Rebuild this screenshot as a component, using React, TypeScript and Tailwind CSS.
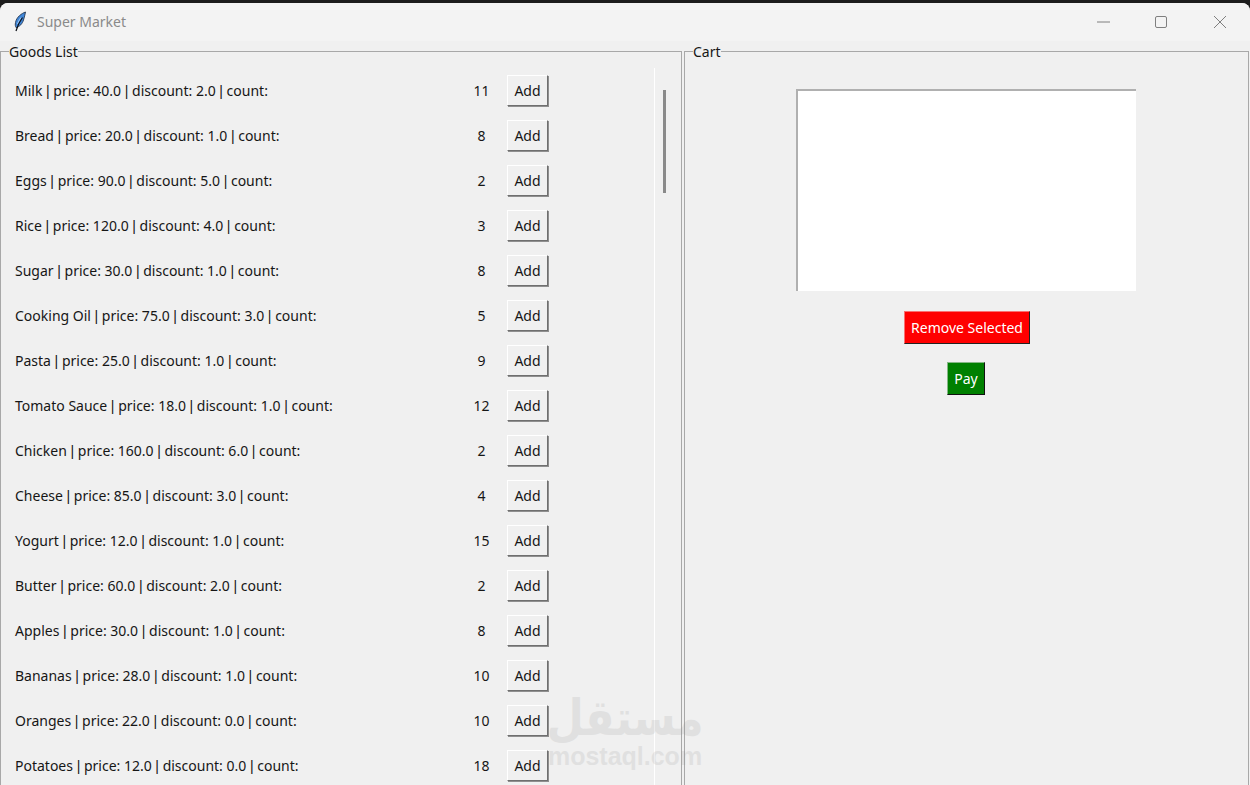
const goods: [string, number][] = [
  ["Milk | price: 40.0 | discount: 2.0 | count:", 11],
  ["Bread | price: 20.0 | discount: 1.0 | count:", 8],
  ["Eggs | price: 90.0 | discount: 5.0 | count:", 2],
  ["Rice | price: 120.0 | discount: 4.0 | count:", 3],
  ["Sugar | price: 30.0 | discount: 1.0 | count:", 8],
  ["Cooking Oil | price: 75.0 | discount: 3.0 | count:", 5],
  ["Pasta | price: 25.0 | discount: 1.0 | count:", 9],
  ["Tomato Sauce | price: 18.0 | discount: 1.0 | count:", 12],
  ["Chicken | price: 160.0 | discount: 6.0 | count:", 2],
  ["Cheese | price: 85.0 | discount: 3.0 | count:", 4],
  ["Yogurt | price: 12.0 | discount: 1.0 | count:", 15],
  ["Butter | price: 60.0 | discount: 2.0 | count:", 2],
  ["Apples | price: 30.0 | discount: 1.0 | count:", 8],
  ["Bananas | price: 28.0 | discount: 1.0 | count:", 10],
  ["Oranges | price: 22.0 | discount: 0.0 | count:", 10],
  ["Potatoes | price: 12.0 | discount: 0.0 | count:", 18],
];

function Feather() {
  return (
    <svg width="16" height="22" viewBox="0 0 16 22" className="ml-[12px]">
      <path d="M13.500 1C9.500 2.500 4.500 6 3.500 11.500c-.4 2.200-.2 3.800.5 5C7.500 16 10.500 12.500 11.500 9c.8-2.800 1.600-5.500 2-8z" fill="#3f86d8" stroke="#26374f" strokeWidth=".9" />
      <path d="M9 6.500C7 9 6 11.500 5.500 13" fill="none" stroke="#a9cdf2" strokeWidth="1" />
      <path d="M10.500 6.500C8 10 5.500 14 4 20" fill="none" stroke="#0b0f16" strokeWidth="1.200" />
    </svg>
  );
}

function Label({ text }: { text: string }) {
  const parts = text.split(" | ");
  return (
    <span className="w-[450px] shrink-0 whitespace-pre">
      {parts.map((p, i) => (
        <span key={p}>
          {i > 0 && (
            <>
              {" "}
              <span className="[font-family:'Liberation_Sans',sans-serif]">|</span>{" "}
            </>
          )}
          {p}
        </span>
      ))}
    </span>
  );
}

export default function App() {
  return (
    <div className="h-[785px] w-[1250px] overflow-hidden bg-[#1c1c1c] pt-[3px] text-[14px] text-[#161616] [font-family:'Noto_Sans',sans-serif]">
      <div className="flex h-[782px] flex-col overflow-hidden rounded-t-[8px] bg-[#f0f0f0]">
        <div className="flex h-[38px] shrink-0 items-center bg-[#f3f3f3]">
          <Feather />
          <span className="ml-[9px] -translate-y-[1px] text-[14px] text-[#8a8a8a]">Super Market</span>
          <div className="ml-auto flex items-center text-[#7f7f7f]">
            <svg width="14" height="14" viewBox="0 0 14 14" className="mr-[43px]"><path d="M0 7h13" stroke="currentColor" /></svg>
            <svg width="14" height="14" viewBox="0 0 14 14" className="mr-[45px]"><rect x="1.500" y="1.500" width="11" height="11" rx="1.500" fill="none" stroke="currentColor" /></svg>
            <svg width="14" height="14" viewBox="0 0 14 14" className="mr-[23px]"><path d="M1 1l12 12M13 1L1 13" stroke="currentColor" /></svg>
          </div>
        </div>
        <div className="relative flex min-h-0 flex-1 gap-[2px]">
          <fieldset className="h-[760px] w-[682px] shrink-0 border border-[#a8a8a8]">
            <legend className="ml-[8px] translate-y-[1px] text-[14px] leading-[20px]">Goods List</legend>
            <div className="flex">
              <div className="mt-[7px] w-[654px] shrink-0 border-r border-[#ffffff]">
                {goods.map(([label, count]) => (
                  <div key={label} className="flex h-[45px] items-center pl-[14px]">
                    <Label text={label} />
                    <span className="w-[33px] shrink-0 text-center">{count}</span>
                    <button className="ml-[9px] h-[31px] w-[41px] border border-t-white border-l-white border-r-[#6f6f6f] border-b-[#6f6f6f] bg-[#f0f0f0] shadow-[1px_1px_0_#8f8f8f]">Add</button>
                  </div>
                ))}
              </div>
              <div className="flex-1 pt-[29px] pl-[8px]">
                <div className="h-[103px] w-[3px] bg-[#8a8a8a]" />
              </div>
            </div>
          </fieldset>
          <fieldset className="h-[760px] w-[565px] shrink-0 border border-[#a8a8a8]">
            <legend className="ml-[8px] translate-y-[1px] text-[14px] leading-[20px]">Cart</legend>
            <div className="flex flex-col items-center pt-[28px] pr-[1px]">
              <div className="h-[202px] w-[340px] border-t-2 border-l-2 border-t-[#b0b0b0] border-l-[#b0b0b0] bg-white" />
              <button className="mt-[20px] ml-[2px] h-[33px] w-[126px] border border-t-[#f87171] border-l-[#f87171] border-r-[#222222] border-b-[#222222] bg-[#ff0000] text-white">Remove Selected</button>
              <button className="mt-[18px] h-[33px] w-[38px] border border-t-[#86b886] border-l-[#86b886] border-r-[#111111] border-b-[#111111] bg-[#008000] text-white">Pay</button>
            </div>
          </fieldset>
          <div className="pointer-events-none absolute left-[548px] top-[652px] flex w-[154px] flex-col items-center text-[#8a8a8a] opacity-15">
            <span dir="rtl" className="h-[50px] scale-y-[1.15] text-[43px] font-bold leading-[50px] [font-family:'DejaVu_Sans',sans-serif]">مستقل</span>
            <span className="text-[25px] font-bold leading-[26px] [font-family:'Liberation_Sans',sans-serif]">mostaql.com</span>
          </div>
        </div>
      </div>
    </div>
  );
}
